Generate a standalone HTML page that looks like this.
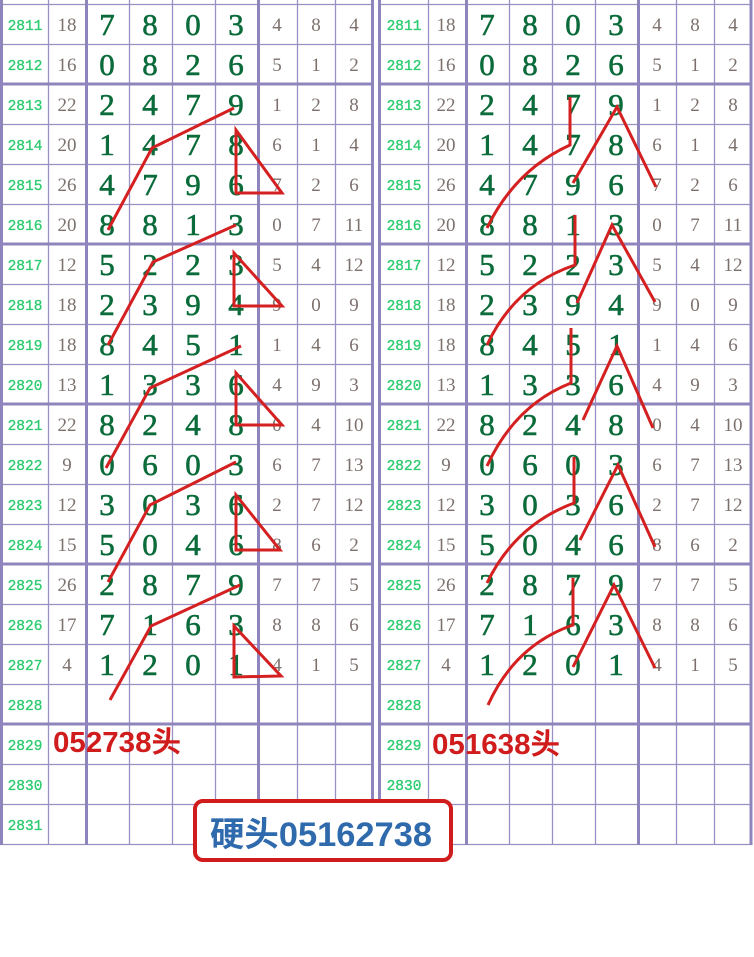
<!DOCTYPE html>
<html><head><meta charset="utf-8"><style>
html,body{margin:0;padding:0;background:#fff;width:754px;height:957px;overflow:hidden}
svg{display:block}
.is{font-family:"Liberation Mono",monospace;font-size:14.5px;fill:#2ecc71;text-anchor:middle;stroke:#2ecc71;stroke-width:0.35}
.sm{font-family:"Liberation Serif",serif;font-size:19px;fill:#7d716d;text-anchor:middle}
.dg{font-family:"Liberation Serif",serif;font-size:31px;fill:#0b6b3a;text-anchor:middle;stroke:#0b6b3a;stroke-width:0.6}
.lb{font-family:"Liberation Sans","Noto Sans CJK SC",sans-serif;font-size:29px;font-weight:bold;fill:#d01c1c}
</style></head><body>
<svg width="754" height="957" viewBox="0 0 754 957" xmlns="http://www.w3.org/2000/svg">
<g stroke="#9a90c4" stroke-width="1.3" fill="none">
<path d="M0 4.5H373M0 44.5H373M0 124.5H373M0 164.5H373M0 204.5H373M0 284.5H373M0 324.5H373M0 364.5H373M0 444.5H373M0 484.5H373M0 524.5H373M0 604.5H373M0 644.5H373M0 684.5H373M0 764.5H373M0 804.5H373M0 844.5H373"/>
<path d="M379 4.5H752M379 44.5H752M379 124.5H752M379 164.5H752M379 204.5H752M379 284.5H752M379 324.5H752M379 364.5H752M379 444.5H752M379 484.5H752M379 524.5H752M379 604.5H752M379 644.5H752M379 684.5H752M379 764.5H752M379 804.5H752M379 844.5H752"/>
<path d="M48.5 0V844M129.5 0V844M172.5 0V844M215.5 0V844M297.5 0V844M335.5 0V844"/>
<path d="M428.5 0V844M509.5 0V844M552.5 0V844M595.5 0V844M676.5 0V844M714.5 0V844"/>
</g>
<g stroke="#8f84bb" stroke-width="3" fill="none">
<path d="M0 84H373M0 244H373M0 404H373M0 564H373M0 724H373"/>
<path d="M379 84H752M379 244H752M379 404H752M379 564H752M379 724H752"/>
<path d="M1.5 0V845M86.5 0V845M258.5 0V845M372.5 0V845M379.5 0V845M466.5 0V845M638.5 0V845M751 0V845"/>
</g>
<g class="is">
<text x="25" y="30">2811</text><text x="25" y="70">2812</text><text x="25" y="110">2813</text><text x="25" y="150">2814</text><text x="25" y="190">2815</text><text x="25" y="230">2816</text><text x="25" y="270">2817</text><text x="25" y="310">2818</text><text x="25" y="350">2819</text><text x="25" y="390">2820</text><text x="25" y="430">2821</text><text x="25" y="470">2822</text><text x="25" y="510">2823</text><text x="25" y="550">2824</text><text x="25" y="590">2825</text><text x="25" y="630">2826</text><text x="25" y="670">2827</text><text x="25" y="710">2828</text><text x="25" y="750">2829</text><text x="25" y="790">2830</text><text x="25" y="830">2831</text>
<text x="404" y="30">2811</text><text x="404" y="70">2812</text><text x="404" y="110">2813</text><text x="404" y="150">2814</text><text x="404" y="190">2815</text><text x="404" y="230">2816</text><text x="404" y="270">2817</text><text x="404" y="310">2818</text><text x="404" y="350">2819</text><text x="404" y="390">2820</text><text x="404" y="430">2821</text><text x="404" y="470">2822</text><text x="404" y="510">2823</text><text x="404" y="550">2824</text><text x="404" y="590">2825</text><text x="404" y="630">2826</text><text x="404" y="670">2827</text><text x="404" y="710">2828</text><text x="404" y="750">2829</text><text x="404" y="790">2830</text><text x="404" y="830">2831</text>
</g>
<g class="dg">
<text x="107 150 193 236" y="35">7803</text><text x="107 150 193 236" y="75">0826</text><text x="107 150 193 236" y="115">2479</text><text x="107 150 193 236" y="155">1478</text><text x="107 150 193 236" y="195">4796</text><text x="107 150 193 236" y="235">8813</text><text x="107 150 193 236" y="275">5223</text><text x="107 150 193 236" y="315">2394</text><text x="107 150 193 236" y="355">8451</text><text x="107 150 193 236" y="395">1336</text><text x="107 150 193 236" y="435">8248</text><text x="107 150 193 236" y="475">0603</text><text x="107 150 193 236" y="515">3036</text><text x="107 150 193 236" y="555">5046</text><text x="107 150 193 236" y="595">2879</text><text x="107 150 193 236" y="635">7163</text><text x="107 150 193 236" y="675">1201</text>
<text x="487 530 573 616" y="35">7803</text><text x="487 530 573 616" y="75">0826</text><text x="487 530 573 616" y="115">2479</text><text x="487 530 573 616" y="155">1478</text><text x="487 530 573 616" y="195">4796</text><text x="487 530 573 616" y="235">8813</text><text x="487 530 573 616" y="275">5223</text><text x="487 530 573 616" y="315">2394</text><text x="487 530 573 616" y="355">8451</text><text x="487 530 573 616" y="395">1336</text><text x="487 530 573 616" y="435">8248</text><text x="487 530 573 616" y="475">0603</text><text x="487 530 573 616" y="515">3036</text><text x="487 530 573 616" y="555">5046</text><text x="487 530 573 616" y="595">2879</text><text x="487 530 573 616" y="635">7163</text><text x="487 530 573 616" y="675">1201</text>
</g>
<g class="sm">
<text x="67" y="31">18</text><text x="277" y="31">4</text><text x="316" y="31">8</text><text x="354" y="31">4</text>
<text x="67" y="71">16</text><text x="277" y="71">5</text><text x="316" y="71">1</text><text x="354" y="71">2</text>
<text x="67" y="111">22</text><text x="277" y="111">1</text><text x="316" y="111">2</text><text x="354" y="111">8</text>
<text x="67" y="151">20</text><text x="277" y="151">6</text><text x="316" y="151">1</text><text x="354" y="151">4</text>
<text x="67" y="191">26</text><text x="277" y="191">7</text><text x="316" y="191">2</text><text x="354" y="191">6</text>
<text x="67" y="231">20</text><text x="277" y="231">0</text><text x="316" y="231">7</text><text x="354" y="231">11</text>
<text x="67" y="271">12</text><text x="277" y="271">5</text><text x="316" y="271">4</text><text x="354" y="271">12</text>
<text x="67" y="311">18</text><text x="277" y="311">9</text><text x="316" y="311">0</text><text x="354" y="311">9</text>
<text x="67" y="351">18</text><text x="277" y="351">1</text><text x="316" y="351">4</text><text x="354" y="351">6</text>
<text x="67" y="391">13</text><text x="277" y="391">4</text><text x="316" y="391">9</text><text x="354" y="391">3</text>
<text x="67" y="431">22</text><text x="277" y="431">0</text><text x="316" y="431">4</text><text x="354" y="431">10</text>
<text x="67" y="471">9</text><text x="277" y="471">6</text><text x="316" y="471">7</text><text x="354" y="471">13</text>
<text x="67" y="511">12</text><text x="277" y="511">2</text><text x="316" y="511">7</text><text x="354" y="511">12</text>
<text x="67" y="551">15</text><text x="277" y="551">8</text><text x="316" y="551">6</text><text x="354" y="551">2</text>
<text x="67" y="591">26</text><text x="277" y="591">7</text><text x="316" y="591">7</text><text x="354" y="591">5</text>
<text x="67" y="631">17</text><text x="277" y="631">8</text><text x="316" y="631">8</text><text x="354" y="631">6</text>
<text x="67" y="671">4</text><text x="277" y="671">4</text><text x="316" y="671">1</text><text x="354" y="671">5</text>
<text x="446" y="31">18</text><text x="657" y="31">4</text><text x="695" y="31">8</text><text x="733" y="31">4</text>
<text x="446" y="71">16</text><text x="657" y="71">5</text><text x="695" y="71">1</text><text x="733" y="71">2</text>
<text x="446" y="111">22</text><text x="657" y="111">1</text><text x="695" y="111">2</text><text x="733" y="111">8</text>
<text x="446" y="151">20</text><text x="657" y="151">6</text><text x="695" y="151">1</text><text x="733" y="151">4</text>
<text x="446" y="191">26</text><text x="657" y="191">7</text><text x="695" y="191">2</text><text x="733" y="191">6</text>
<text x="446" y="231">20</text><text x="657" y="231">0</text><text x="695" y="231">7</text><text x="733" y="231">11</text>
<text x="446" y="271">12</text><text x="657" y="271">5</text><text x="695" y="271">4</text><text x="733" y="271">12</text>
<text x="446" y="311">18</text><text x="657" y="311">9</text><text x="695" y="311">0</text><text x="733" y="311">9</text>
<text x="446" y="351">18</text><text x="657" y="351">1</text><text x="695" y="351">4</text><text x="733" y="351">6</text>
<text x="446" y="391">13</text><text x="657" y="391">4</text><text x="695" y="391">9</text><text x="733" y="391">3</text>
<text x="446" y="431">22</text><text x="657" y="431">0</text><text x="695" y="431">4</text><text x="733" y="431">10</text>
<text x="446" y="471">9</text><text x="657" y="471">6</text><text x="695" y="471">7</text><text x="733" y="471">13</text>
<text x="446" y="511">12</text><text x="657" y="511">2</text><text x="695" y="511">7</text><text x="733" y="511">12</text>
<text x="446" y="551">15</text><text x="657" y="551">8</text><text x="695" y="551">6</text><text x="733" y="551">2</text>
<text x="446" y="591">26</text><text x="657" y="591">7</text><text x="695" y="591">7</text><text x="733" y="591">5</text>
<text x="446" y="631">17</text><text x="657" y="631">8</text><text x="695" y="631">8</text><text x="733" y="631">6</text>
<text x="446" y="671">4</text><text x="657" y="671">4</text><text x="695" y="671">1</text><text x="733" y="671">5</text>
</g>
<g stroke="#d42020" stroke-width="3" fill="none" stroke-linejoin="miter">
<path d="M108 230L152 148L234 108"/>
<path d="M108 345L153 262L236 225"/>
<path d="M106 468L150 388L241 346"/>
<path d="M108 582L150 505L236 462"/>
<path d="M110 700L151 626L240 585"/>
<path d="M236 130L282 193L236 193Z"/>
<path d="M234 253L282 306L234 306Z"/>
<path d="M236 373L282 425L236 425Z"/>
<path d="M236 495L280 550L236 550Z"/>
<path d="M234 626L281 676L234 677Z"/>
<path d="M570 97V145Q515 170 487 228"/>
<path d="M573 183L617 107L656 187"/>
<path d="M575 215V265Q515 285 487 345"/>
<path d="M577 303L612 225L655 302"/>
<path d="M571 328V383Q515 405 487 466"/>
<path d="M583 420L617 346L653 428"/>
<path d="M574 457V503Q515 525 487 583"/>
<path d="M580 540L618 465L655 547"/>
<path d="M573 578V625Q515 645 488 705"/>
<path d="M573 667L614 585L655 668"/>
</g>
<text class="lb" x="53" y="752" textLength="128" lengthAdjust="spacingAndGlyphs">052738头</text>
<text class="lb" x="432" y="754" textLength="128" lengthAdjust="spacingAndGlyphs">051638头</text>
<rect x="195" y="801" width="256" height="59" rx="8" fill="#fff" stroke="#d01c1c" stroke-width="4"/>
<text x="210" y="846" textLength="222" lengthAdjust="spacingAndGlyphs" font-family="Liberation Sans,'Noto Sans CJK SC',sans-serif" font-size="34" font-weight="bold" fill="#2f6aad">硬头05162738</text>
</svg>
</body></html>
